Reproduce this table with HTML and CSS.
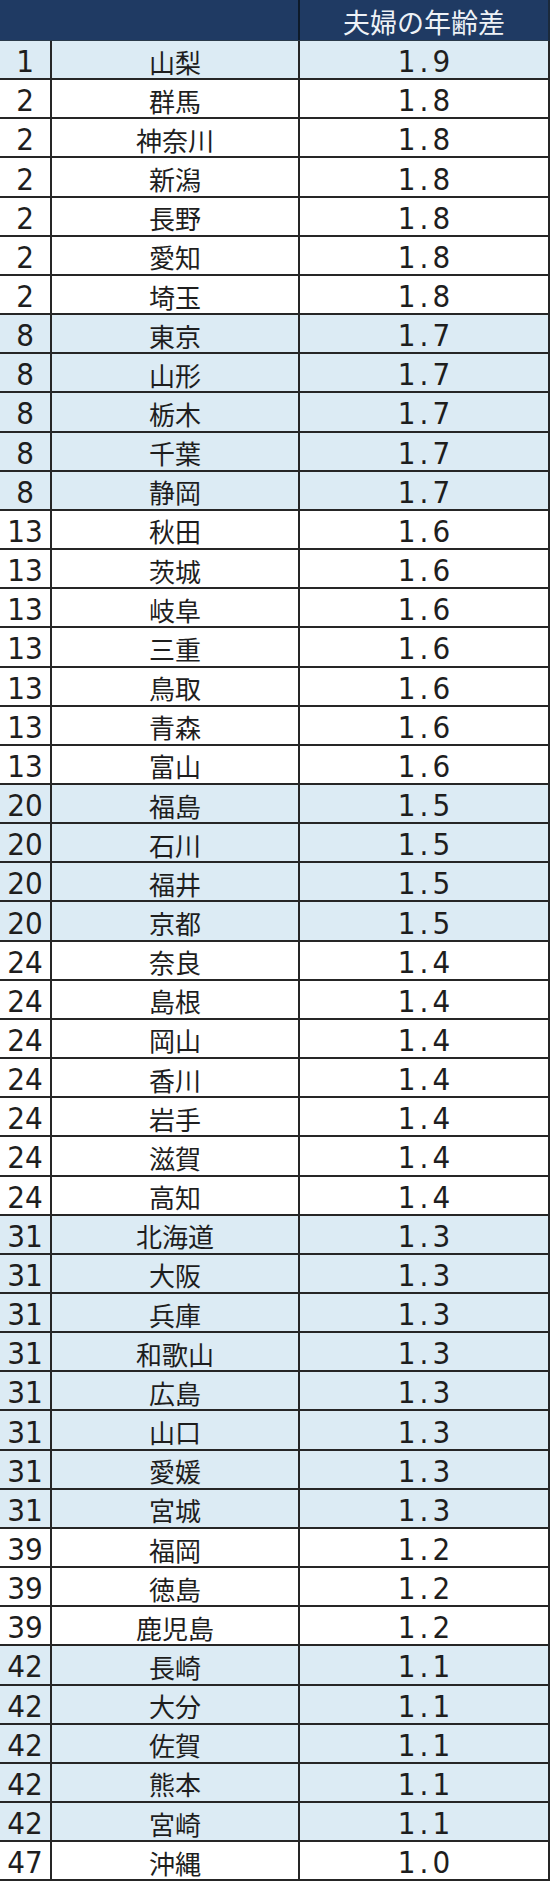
FILE: index.html
```html
<!DOCTYPE html>
<html lang="ja">
<head>
<meta charset="utf-8">
<link rel="stylesheet" href="styles.css">
</head>
<body>
<div class="table">
  <div class="head"><div class="hcell blank"></div><div class="hcell title">夫婦の年齢差</div></div>
  <div class="row hl"><div class="rank">1</div><div class="pref">山梨</div><div class="val">1.9</div></div>
  <div class="row"><div class="rank">2</div><div class="pref">群馬</div><div class="val">1.8</div></div>
  <div class="row"><div class="rank">2</div><div class="pref">神奈川</div><div class="val">1.8</div></div>
  <div class="row"><div class="rank">2</div><div class="pref">新潟</div><div class="val">1.8</div></div>
  <div class="row"><div class="rank">2</div><div class="pref">長野</div><div class="val">1.8</div></div>
  <div class="row"><div class="rank">2</div><div class="pref">愛知</div><div class="val">1.8</div></div>
  <div class="row"><div class="rank">2</div><div class="pref">埼玉</div><div class="val">1.8</div></div>
  <div class="row hl"><div class="rank">8</div><div class="pref">東京</div><div class="val">1.7</div></div>
  <div class="row hl"><div class="rank">8</div><div class="pref">山形</div><div class="val">1.7</div></div>
  <div class="row hl"><div class="rank">8</div><div class="pref">栃木</div><div class="val">1.7</div></div>
  <div class="row hl"><div class="rank">8</div><div class="pref">千葉</div><div class="val">1.7</div></div>
  <div class="row hl"><div class="rank">8</div><div class="pref">静岡</div><div class="val">1.7</div></div>
  <div class="row"><div class="rank">13</div><div class="pref">秋田</div><div class="val">1.6</div></div>
  <div class="row"><div class="rank">13</div><div class="pref">茨城</div><div class="val">1.6</div></div>
  <div class="row"><div class="rank">13</div><div class="pref">岐阜</div><div class="val">1.6</div></div>
  <div class="row"><div class="rank">13</div><div class="pref">三重</div><div class="val">1.6</div></div>
  <div class="row"><div class="rank">13</div><div class="pref">鳥取</div><div class="val">1.6</div></div>
  <div class="row"><div class="rank">13</div><div class="pref">青森</div><div class="val">1.6</div></div>
  <div class="row"><div class="rank">13</div><div class="pref">富山</div><div class="val">1.6</div></div>
  <div class="row hl"><div class="rank">20</div><div class="pref">福島</div><div class="val">1.5</div></div>
  <div class="row hl"><div class="rank">20</div><div class="pref">石川</div><div class="val">1.5</div></div>
  <div class="row hl"><div class="rank">20</div><div class="pref">福井</div><div class="val">1.5</div></div>
  <div class="row hl"><div class="rank">20</div><div class="pref">京都</div><div class="val">1.5</div></div>
  <div class="row"><div class="rank">24</div><div class="pref">奈良</div><div class="val">1.4</div></div>
  <div class="row"><div class="rank">24</div><div class="pref">島根</div><div class="val">1.4</div></div>
  <div class="row"><div class="rank">24</div><div class="pref">岡山</div><div class="val">1.4</div></div>
  <div class="row"><div class="rank">24</div><div class="pref">香川</div><div class="val">1.4</div></div>
  <div class="row"><div class="rank">24</div><div class="pref">岩手</div><div class="val">1.4</div></div>
  <div class="row"><div class="rank">24</div><div class="pref">滋賀</div><div class="val">1.4</div></div>
  <div class="row"><div class="rank">24</div><div class="pref">高知</div><div class="val">1.4</div></div>
  <div class="row hl"><div class="rank">31</div><div class="pref">北海道</div><div class="val">1.3</div></div>
  <div class="row hl"><div class="rank">31</div><div class="pref">大阪</div><div class="val">1.3</div></div>
  <div class="row hl"><div class="rank">31</div><div class="pref">兵庫</div><div class="val">1.3</div></div>
  <div class="row hl"><div class="rank">31</div><div class="pref">和歌山</div><div class="val">1.3</div></div>
  <div class="row hl"><div class="rank">31</div><div class="pref">広島</div><div class="val">1.3</div></div>
  <div class="row hl"><div class="rank">31</div><div class="pref">山口</div><div class="val">1.3</div></div>
  <div class="row hl"><div class="rank">31</div><div class="pref">愛媛</div><div class="val">1.3</div></div>
  <div class="row hl"><div class="rank">31</div><div class="pref">宮城</div><div class="val">1.3</div></div>
  <div class="row"><div class="rank">39</div><div class="pref">福岡</div><div class="val">1.2</div></div>
  <div class="row"><div class="rank">39</div><div class="pref">徳島</div><div class="val">1.2</div></div>
  <div class="row"><div class="rank">39</div><div class="pref">鹿児島</div><div class="val">1.2</div></div>
  <div class="row hl"><div class="rank">42</div><div class="pref">長崎</div><div class="val">1.1</div></div>
  <div class="row hl"><div class="rank">42</div><div class="pref">大分</div><div class="val">1.1</div></div>
  <div class="row hl"><div class="rank">42</div><div class="pref">佐賀</div><div class="val">1.1</div></div>
  <div class="row hl"><div class="rank">42</div><div class="pref">熊本</div><div class="val">1.1</div></div>
  <div class="row hl"><div class="rank">42</div><div class="pref">宮崎</div><div class="val">1.1</div></div>
  <div class="row"><div class="rank">47</div><div class="pref">沖縄</div><div class="val">1.0</div></div>
</div>
</body>
</html>
```

FILE: styles.css
```css
html, body {
  margin: 0;
  padding: 0;
  background: #ffffff;
}
.table {
  width: 550px;
  font-family: "Noto Sans CJK JP", "Noto Sans", sans-serif;
  color: #1e1e1e;
}
.head {
  display: grid;
  grid-template-columns: 300px 1fr;
  height: 41px;
  box-sizing: border-box;
  background: #1f3a63;
  border-bottom: 1px solid #2a3a4a;
  border-right: 2px solid #1b2a3c;
}
.hcell {
  display: flex;
  align-items: center;
  justify-content: center;
}
.blank {
  border-right: 2px solid #0d1a2a;
}
.title {
  color: #eef2f7;
  font-size: 27px;
  line-height: 1;
  padding-top: 2px;
}
.row {
  display: grid;
  grid-template-columns: 52px 248px 1fr;
  height: 39.17px;
  box-sizing: border-box;
  border-bottom: 2px solid #262626;
  border-right: 2px solid #262626;
  background: #ffffff;
}
.row.hl {
  background: #dcebf4;
}
.rank, .pref, .val {
  display: flex;
  align-items: center;
  justify-content: center;
  line-height: 1;
  padding-top: 4px;
}
.rank, .pref {
  border-right: 2px solid #262626;
}
.rank, .val {
  font-family: "Liberation Sans Narrow", "DejaVu Sans Condensed", "Liberation Sans", sans-serif;
  font-stretch: condensed;
}
.rank {
  font-size: 31px;
}
.pref {
  font-size: 26px;
}
.val {
  font-size: 31px;
  letter-spacing: 4px;
  padding-left: 4px;
}
```
